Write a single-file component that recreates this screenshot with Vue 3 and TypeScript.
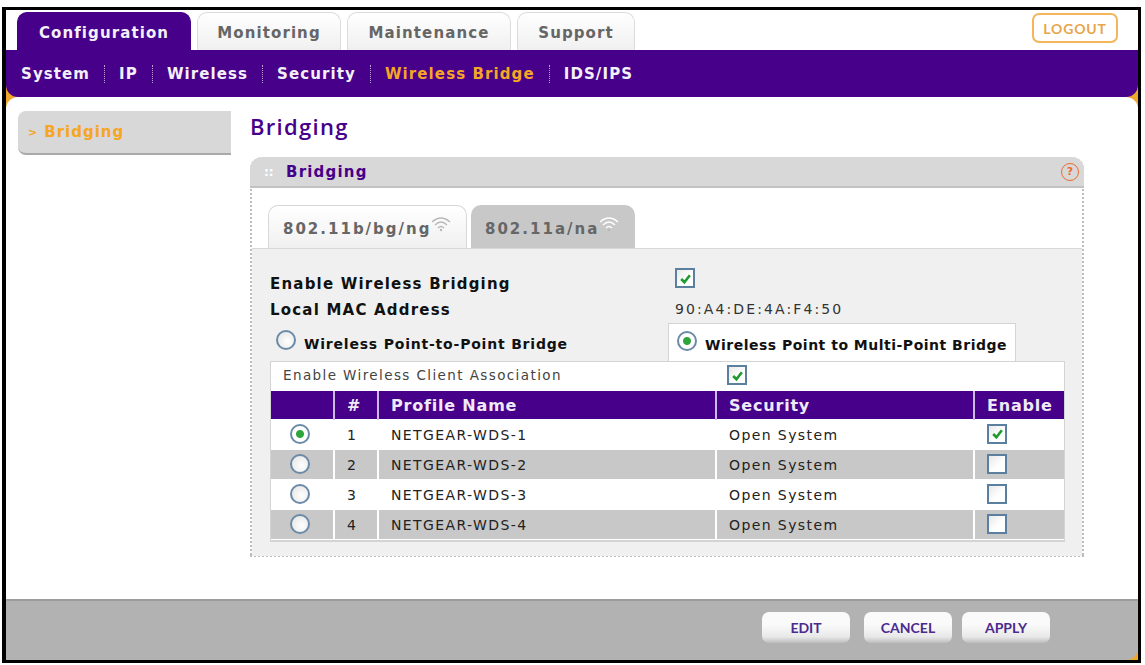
<script setup lang="ts">
const topTabs = ['Configuration', 'Monitoring', 'Maintenance', 'Support']
const subItems = ['System', 'IP', 'Wireless', 'Security', 'Wireless Bridge', 'IDS/IPS']
const bands = [
  { name: '802.11b/bg/ng', active: true },
  { name: '802.11a/na', active: false },
]
const profiles = [
  { id: 1, name: 'NETGEAR-WDS-1', security: 'Open System', selected: true },
  { id: 2, name: 'NETGEAR-WDS-2', security: 'Open System', selected: false },
  { id: 3, name: 'NETGEAR-WDS-3', security: 'Open System', selected: false },
  { id: 4, name: 'NETGEAR-WDS-4', security: 'Open System', selected: false },
]
</script>

<template>
  <div class="frame">
    <header class="top">
      <nav class="top-tabs">
        <span
          v-for="(tab, i) in topTabs"
          :key="tab"
          :class="['top-tab', 'tab-' + i, { active: i === 0 }]"
        >{{ tab }}</span>
      </nav>
      <span class="logout">LOGOUT</span>
    </header>

    <nav class="sub-nav">
      <template v-for="(item, i) in subItems" :key="item">
        <span v-if="i > 0" class="sub-sep"></span>
        <span :class="['sub-item', { current: item === 'Wireless Bridge' }]">{{ item }}</span>
      </template>
    </nav>

    <div class="page">
      <main class="body">
        <aside class="side">
          <div class="side-item"><span class="chev">&gt;</span> Bridging</div>
        </aside>

        <section class="content">
          <h1 class="title">Bridging</h1>
          <div class="panel">
            <div class="panel-head">
              <span class="grip">::</span>
              <span class="panel-title">Bridging</span>
              <span class="help">?</span>
            </div>
            <div class="panel-body">
              <div class="band-tabs">
                <span v-for="b in bands" :key="b.name" :class="['band', { active: b.active }]">
                  {{ b.name }}
                  <svg class="wifi" viewBox="0 0 20 16" width="20" height="16">
                    <path d="M1 6 Q10 -2 19 6" />
                    <path d="M4 9 Q10 3 16 9" />
                    <path d="M7 12 Q10 9 13 12" />
                    <circle cx="10" cy="14" r="1.2" />
                  </svg>
                </span>
              </div>

              <div class="band-body">
                <div class="field">
                  <span class="label">Enable Wireless Bridging</span>
                  <span class="check">
                    <svg viewBox="0 0 12 12"><path d="M2 6.5 L5 9.5 L10 3" /></svg>
                  </span>
                </div>
                <div class="field mac">
                  <span class="label">Local MAC Address</span>
                  <span class="mac-value">90:A4:DE:4A:F4:50</span>
                </div>

                <div class="mode-tabs">
                  <span class="mode">
                    <span class="radio"></span>
                    Wireless Point-to-Point Bridge
                  </span>
                  <span class="mode active">
                    <span class="radio on"></span>
                    Wireless Point to Multi-Point Bridge
                  </span>
                </div>

                <div class="mode-body">
                  <div class="assoc">
                    <span class="assoc-label">Enable Wireless Client Association</span>
                    <span class="check">
                      <svg viewBox="0 0 12 12"><path d="M2 6.5 L5 9.5 L10 3" /></svg>
                    </span>
                  </div>

                  <table class="profiles">
                    <colgroup>
                      <col class="c-radio" />
                      <col class="c-num" />
                      <col class="c-name" />
                      <col class="c-sec" />
                      <col />
                    </colgroup>
                    <thead>
                      <tr>
                        <th></th>
                        <th class="num">#</th>
                        <th>Profile Name</th>
                        <th>Security</th>
                        <th class="en">Enable</th>
                      </tr>
                    </thead>
                    <tbody>
                      <tr v-for="p in profiles" :key="p.id">
                        <td class="mid"><span :class="['radio', { on: p.selected }]"></span></td>
                        <td class="num">{{ p.id }}</td>
                        <td>{{ p.name }}</td>
                        <td>{{ p.security }}</td>
                        <td class="mid">
                          <span class="check">
                            <svg v-if="p.selected" viewBox="0 0 12 12"><path d="M2 6.5 L5 9.5 L10 3" /></svg>
                          </span>
                        </td>
                      </tr>
                    </tbody>
                  </table>
                </div>
              </div>
            </div>
          </div>
        </section>
      </main>

      <footer class="foot">
        <button class="btn">EDIT</button>
        <button class="btn">CANCEL</button>
        <button class="btn">APPLY</button>
      </footer>
    </div>
  </div>
</template>

<style>
html, body {
  margin: 0;
  background: #fff;
}
</style>

<style scoped>
.frame {
  box-sizing: border-box;
  width: 1139px;
  height: 656px;
  margin: 7px 0 0 2px;
  border: solid #000;
  border-width: 3px 3px 3px 4px;
  display: flex;
  flex-direction: column;
  background: #fff;
  font-family: "DejaVu Sans", Verdana, sans-serif;
  overflow: hidden;
}

.top {
  height: 40px;
  flex: none;
  display: flex;
  justify-content: space-between;
  align-items: flex-end;
  padding: 0 20px 0 11px;
}
.top-tabs {
  display: flex;
  gap: 6px;
}
.top-tab {
  height: 38px;
  box-sizing: border-box;
  display: flex;
  align-items: center;
  justify-content: center;
  padding-top: 2px;
  border: 1px solid #dcdcdc;
  border-bottom: 0;
  border-radius: 10px 10px 0 0;
  background: linear-gradient(#fff, #f0f0f0);
  color: #666;
  font-size: 15px;
  font-weight: bold;
  letter-spacing: 1.1px;
}
.top-tab.active {
  background: #46008a;
  border-color: #46008a;
  color: #f4f0fa;
}
.tab-0 { width: 174px; }
.tab-1 { width: 144px; }
.tab-2 { width: 164px; }
.tab-3 { width: 118px; }

.logout {
  box-sizing: border-box;
  width: 86px;
  height: 30px;
  margin-bottom: 7px;
  border: 2px solid #f5b55a;
  border-radius: 7px;
  color: #e9a54a;
  font: bold 14px "Lato", sans-serif;
  letter-spacing: 0.8px;
  display: flex;
  align-items: center;
  justify-content: center;
}

.sub-nav {
  position: relative;
  z-index: 1;
  height: 47px;
  flex: none;
  box-sizing: border-box;
  background: #46008a;
  border-radius: 0 0 12px 12px;
  display: flex;
  align-items: center;
  padding: 0 0 0 15px;
  color: #f4f0fa;
  font-size: 15px;
  font-weight: bold;
  letter-spacing: 1.1px;
}
.sub-sep {
  height: 18px;
  border-left: 1px dotted #b9a4d4;
  margin: 0 14px;
}
.sub-item.current {
  color: #f5a623;
}

.page {
  flex: 1;
  min-height: 0;
  display: flex;
  flex-direction: column;
  margin-top: -12px;
  background: #f0a72e;
}
.body {
  flex: 1;
  min-height: 0;
  display: flex;
  margin-top: 12px;
  background: #fff;
  border-radius: 12px 12px 0 0;
  padding-top: 14px;
}

.side {
  width: 213px;
  margin-left: 12px;
  flex: none;
}
.side-item {
  height: 44px;
  box-sizing: border-box;
  background: #d8d8d8;
  border-bottom: 2px solid #a9a9a9;
  border-radius: 8px 0 0 8px;
  color: #f5a623;
  font-size: 15px;
  font-weight: bold;
  letter-spacing: 1px;
  display: flex;
  align-items: center;
  gap: 6px;
  padding-left: 10px;
}
.chev {
  font-size: 11px;
  font-weight: bold;
}

.content {
  margin-left: 19px;
  width: 834px;
}
.title {
  margin: 0 0 16px;
  height: 30px;
  font: 600 22px/30px "Open Sans", sans-serif;
  letter-spacing: 1.3px;
  color: #46008a;
}

.panel {
  box-sizing: border-box;
  height: 400px;
  border: dotted #bdbdbd;
  border-width: 0 2px 2px 2px;
  border-radius: 12px 12px 0 0;
}
.panel-head {
  height: 31px;
  margin: 0 -2px;
  box-sizing: border-box;
  background: #d8d8d8;
  border-bottom: 2px solid #c2c2c2;
  border-radius: 12px 12px 0 0;
  display: flex;
  align-items: center;
  padding: 0 5px 0 14px;
}
.grip {
  color: #fff;
  font-size: 12px;
  font-weight: bold;
  width: 22px;
}
.panel-title {
  flex: 1;
  color: #46008a;
  font-size: 15px;
  font-weight: bold;
  letter-spacing: 1.2px;
}
.help {
  width: 18px;
  height: 18px;
  box-sizing: border-box;
  border: 1.5px solid #ee6a30;
  border-radius: 50%;
  color: #ee6a30;
  font-size: 11px;
  font-weight: bold;
  text-align: center;
  line-height: 15px;
}

.panel-body {
  padding-top: 17px;
}
.band-tabs {
  display: flex;
  gap: 4px;
  padding-left: 16px;
}
.band {
  height: 43px;
  box-sizing: border-box;
  display: flex;
  align-items: center;
  padding: 4px 0 0 14px;
  background: #c8c8c8;
  border-radius: 10px 10px 0 0;
  color: #666;
  font-size: 15px;
  font-weight: bold;
  letter-spacing: 2px;
}
.band.active {
  background: linear-gradient(#fff, #f0f0f0);
  border: 1px solid #d8d8d8;
  border-bottom: 0;
}
.band:first-child { width: 199px; }
.band:last-child { width: 164px; }
.wifi {
  flex: none;
  margin-top: -10px;
  fill: none;
  stroke: #fff;
  stroke-width: 1.3;
}
.band.active .wifi {
  stroke: #b8b8b8;
}
.wifi circle {
  fill: #b8b8b8;
  stroke: none;
}

.band-body {
  background: #f0f0f0;
  border-top: 1px solid #d8d8d8;
  height: 308px;
  box-sizing: border-box;
  padding: 19px 18px 0;
}
.field {
  display: flex;
  align-items: center;
  height: 20px;
}
.field.mac {
  margin-top: 10px;
  height: 22px;
}
.label {
  width: 405px;
  margin-top: 12px;
  color: #111;
  font-size: 15px;
  font-weight: bold;
  letter-spacing: 1.2px;
}
.field.mac .label {
  margin-top: 2px;
}
.mac-value {
  color: #333;
  font-size: 14px;
  letter-spacing: 2.1px;
}
.check {
  width: 20px;
  height: 20px;
  box-sizing: border-box;
  display: flex;
  flex: none;
  align-items: center;
  justify-content: center;
  border: 2px solid #5b7f9f;
  background: linear-gradient(135deg, #e8e8e8, #fff 60%);
}
.check svg {
  width: 13px;
  height: 13px;
  fill: none;
  stroke: #1f9a2e;
  stroke-width: 2.4;
}

.mode-tabs {
  display: flex;
  height: 38px;
  margin-top: 3px;
}
.mode {
  box-sizing: border-box;
  display: flex;
  align-items: center;
  gap: 8px;
  padding-top: 4px;
  color: #111;
  font-size: 14px;
  font-weight: bold;
  letter-spacing: 0.8px;
}
.mode .radio {
  margin-bottom: 8px;
}
.mode:first-child {
  width: 398px;
  padding-left: 6px;
}
.mode.active {
  width: 348px;
  padding-left: 8px;
  background: #fff;
  border: solid #d4d4d4;
  border-width: 1px 1px 0 1px;
  letter-spacing: 0.5px;
}
.radio {
  flex: none;
  display: block;
  width: 20px;
  height: 20px;
  box-sizing: border-box;
  border: 2px solid #6b8aa8;
  border-radius: 50%;
  background: radial-gradient(circle at 60% 60%, #fff, #e2e2e2);
}
.radio.on {
  background: radial-gradient(circle, #2ea53c 0 3.5px, #fff 4.5px);
}

.mode-body {
  background: #fff;
  width: 795px;
  height: 181px;
  box-sizing: border-box;
  border: solid #d4d4d4;
  border-width: 1px 1px 2px 1px;
}
.assoc {
  height: 29px;
  box-sizing: border-box;
  padding-bottom: 3px;
  display: flex;
  align-items: center;
}
.assoc-label {
  width: 456px;
  padding-left: 12px;
  box-sizing: border-box;
  color: #444;
  font-size: 13.5px;
  letter-spacing: 1.4px;
}

.profiles {
  width: 100%;
  table-layout: fixed;
  border-collapse: collapse;
  font-size: 14px;
  color: #222;
}
.c-radio { width: 63px; }
.c-num { width: 44px; }
.c-name { width: 338px; }
.c-sec { width: 258px; }
.profiles th {
  height: 28px;
  padding: 0 0 0 12px;
  background: #46008a;
  border-left: 2px solid #cdb9e6;
  color: #f0eaf8;
  text-align: left;
  font-size: 16px;
  letter-spacing: 0.8px;
}
.profiles th:first-child {
  border-left: 0;
}
.profiles td {
  height: 29px;
  padding: 0 0 0 12px;
  border-left: 2px solid #fff;
  border-top: 1px solid #fff;
  letter-spacing: 1.4px;
}
.profiles td:first-child {
  border-left: 0;
}
.profiles td.mid {
  padding: 0;
}
.profiles td .radio {
  margin: 0 0 2px 19px;
}
.profiles td .check {
  margin: 0 0 2px 12px;
}
.profiles tbody tr:nth-child(even) td {
  background: #c8c8c8;
}

.foot {
  height: 61px;
  flex: none;
  box-sizing: border-box;
  background: #b2b2b2;
  border-top: 2px solid #9c9c9c;
  border-radius: 0 0 12px 0;
  display: flex;
  align-items: flex-start;
  justify-content: flex-end;
  padding: 11px 88px 0 0;
  gap: 10px;
}
.btn {
  width: 88px;
  height: 31px;
  border: 0;
  border-radius: 7px;
  background: linear-gradient(#fafafa 40%, #e8e8e8 80%, #bdbdbd);
  color: #4b2a8f;
  font: bold 14px "Lato", sans-serif;
  padding: 0;
}
.btn:first-child {
  margin-right: 4px;
}
</style>
